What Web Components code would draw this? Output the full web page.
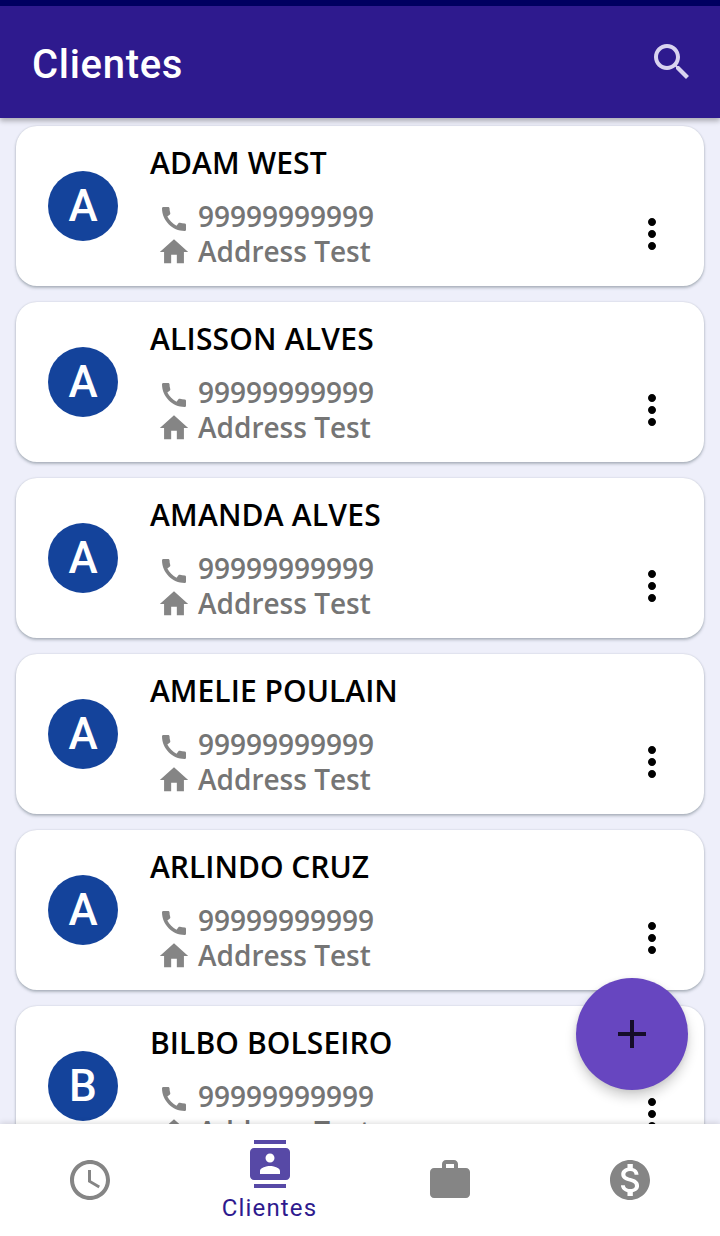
<!DOCTYPE html>
<html lang="pt">
<head>
<meta charset="utf-8">
<title>Clientes</title>
<style>
html, body { margin: 0; height: 100%; }
body { font-family: "Open Sans", "Noto Sans", sans-serif; overflow: hidden; }
</style>
</head>
<body>
<clients-app></clients-app>
<script>
const ICONS = {
  search: 'M15.5 14h-.79l-.28-.27C15.41 12.59 16 11.11 16 9.5 16 5.91 13.09 3 9.5 3S3 5.91 3 9.5 5.91 16 9.5 16c1.61 0 3.09-.59 4.23-1.57l.27.28v.79l5 4.99L20.49 19l-4.99-5zm-6 0C7.01 14 5 11.99 5 9.5S7.01 5 9.5 5 14 7.01 14 9.5 11.99 14 9.5 14z',
  phone: 'M20.01 15.38c-1.23 0-2.42-.2-3.53-.56-.35-.12-.74-.03-1.01.24l-1.57 1.97c-2.83-1.35-5.48-3.9-6.89-6.83l1.95-1.66c.27-.28.35-.67.24-1.02-.37-1.11-.56-2.3-.56-3.53 0-.54-.45-.99-.99-.99H4.19C3.65 3 3 3.24 3 3.99 3 13.28 10.73 21 20.01 21c.71 0 .99-.63.99-1.18v-3.45c0-.54-.45-.99-.99-.99z',
  home: 'M10 20v-6h4v6h5v-8h3L12 3 2 12h3v8z',
  more: 'M12 8c1.1 0 2-.9 2-2s-.9-2-2-2-2 .9-2 2 .9 2 2 2zm0 2c-1.1 0-2 .9-2 2s.9 2 2 2 2-.9 2-2-.9-2-2-2zm0 6c-1.1 0-2 .9-2 2s.9 2 2 2 2-.9 2-2-.9-2-2-2z',
  add: 'M19 13h-6v6h-2v-6H5v-2h6V5h2v6h6v2z',
  clock: 'M11.99 2C6.47 2 2 6.48 2 12s4.47 10 9.99 10C17.52 22 22 17.52 22 12S17.52 2 11.99 2zM12 20c-4.42 0-8-3.58-8-8s3.58-8 8-8 8 3.58 8 8-3.58 8-8 8zm.5-13H11v6l5.25 3.15.75-1.23-4.5-2.67z',
  contacts: 'M20 0H4v2h16V0zM4 24h16v-2H4v2zM20 4H4c-1.1 0-2 .9-2 2v12c0 1.1.9 2 2 2h16c1.1 0 2-.9 2-2V6c0-1.1-.9-2-2-2zm-8 2.75c1.24 0 2.25 1.01 2.25 2.25s-1.01 2.25-2.25 2.25S9.75 10.24 9.75 9 10.76 6.75 12 6.75zM17 17H7v-1.5c0-1.67 3.33-2.5 5-2.5s5 .83 5 2.5V17z',
  work: 'M20 6h-4V4c0-1.11-.89-2-2-2h-4c-1.11 0-2 .89-2 2v2H4c-1.11 0-1.99.89-1.99 2L2 19c0 1.11.89 2 2 2h16c1.11 0 2-.89 2-2V8c0-1.11-.89-2-2-2zm-6 0h-4V4h4v2z',
  money: 'M12 2C6.48 2 2 6.48 2 12s4.48 10 10 10 10-4.48 10-10S17.52 2 12 2zm1.41 16.09V20h-2.67v-1.93c-1.71-.36-3.16-1.46-3.27-3.4h1.96c.1 1.05.82 1.87 2.65 1.87 1.96 0 2.4-.98 2.4-1.59 0-.83-.44-1.61-2.67-2.14-2.48-.6-4.18-1.62-4.18-3.67 0-1.72 1.39-2.84 3.11-3.21V4h2.67v1.95c1.86.45 2.79 1.86 2.85 3.39H14.3c-.05-1.11-.64-1.87-2.22-1.87-1.5 0-2.4.68-2.4 1.64 0 .84.65 1.39 2.67 1.91s4.18 1.39 4.18 3.91c-.01 1.83-1.38 2.83-3.12 3.16z'
};

function define(name, html) {
  const template = document.createElement('template');
  template.innerHTML = html;
  customElements.define(name, class extends HTMLElement {
    constructor() {
      super();
      this.attachShadow({ mode: 'open' }).append(template.content.cloneNode(true));
    }
  });
}

customElements.define('md-icon', class extends HTMLElement {
  connectedCallback() {
    if (this.shadowRoot) return;
    this.attachShadow({ mode: 'open' }).innerHTML = `
      <style>
        :host { display: block; width: var(--size, 48px); height: var(--size, 48px); flex: none; }
        svg { display: block; width: 100%; height: 100%; fill: currentColor; }
      </style>
      <svg viewBox="0 0 24 24" aria-hidden="true"><path d="${ICONS[this.getAttribute('name')]}"/></svg>`;
  }
});

define('app-bar', `
  <style>
    :host { display: flex; box-sizing: border-box; height: 118px; flex: none; border-top: 6px solid #000060;
      background: #2e1a8e; color: #fff; padding: 0 24px 0 32px; align-items: center; justify-content: space-between;
      position: relative; z-index: 2; box-shadow: 0 3px 5px rgba(0,0,0,.28); }
    h1 { margin: 6px 0 0; font: 500 40px/48px Roboto, sans-serif; letter-spacing: .7px; }
    md-icon { color: #d9d3f0; }
  </style>
  <h1><slot></slot></h1><md-icon name="search"></md-icon>`);

define('client-card', `
  <style>
    :host { display: flex; box-sizing: border-box; height: 160px; flex: none; border-radius: 21px; background: #fff;
      padding: 0 28px 0 32px; box-shadow: 0 2px 3px rgba(60,75,85,.34), 0 0 2px rgba(60,75,85,.2); }
    .avatar { width: 70px; height: 70px; margin: 45px 32px 0 0; border-radius: 50%; background: #14439b; color: #fff;
      text-align: center; font: 500 44px/70px Roboto, sans-serif; flex: none; }
    .info { flex: 1; padding-top: 17px; }
    .name { font-weight: 600; font-size: 30px; line-height: 40px; color: #000; letter-spacing: var(--tracking, 0); white-space: nowrap; }
    .lines { margin: 16px 0 0 8px; color: #757575; }
    .line { display: flex; align-items: center; gap: 8px; height: 35px; font-weight: 600; font-size: 28px; line-height: 35px; white-space: nowrap; }
    .line md-icon { --size: 32px; color: #858585; }
    .phone md-icon { margin-top: 4px; }
    .line .home { --size: 34px; margin: 0 -1px; }
    .more { margin-top: 84px; color: #000; }
  </style>
  <div class="avatar"><slot name="initial"></slot></div>
  <div class="info">
    <div class="name"><slot></slot></div>
    <div class="lines">
      <div class="line phone"><md-icon name="phone"></md-icon><slot name="phone"></slot></div>
      <div class="line"><md-icon class="home" name="home"></md-icon><slot name="address"></slot></div>
    </div>
  </div>
  <md-icon class="more" name="more"></md-icon>`);

define('nav-item', `
  <style>
    :host { display: flex; flex: 1; flex-direction: column; align-items: center; justify-content: center; color: #858585; }
    :host([active]) { color: #5749a6; justify-content: flex-start; padding-top: 16px; }
    .label { display: none; }
    :host([active]) .label { display: block; color: #2e1a8e; font: 400 24px/28px Roboto, sans-serif; letter-spacing: 1.15px; margin: 6px 1px 0 0; }
  </style>
  <slot name="icon"></slot><div class="label"><slot></slot></div>`);

define('bottom-nav', `
  <style>
    :host { display: flex; height: 112px; flex: none; background: #fff; position: relative; z-index: 4;
      box-shadow: 0 -1px 6px rgba(0,0,0,.14); }
  </style><slot></slot>`);

define('add-button', `
  <style>
    :host { position: absolute; right: 32px; bottom: 34px; z-index: 3; width: 112px; height: 112px; border-radius: 50%;
      background: #6746c0; color: #150d29; display: flex; align-items: center; justify-content: center;
      box-shadow: 0 7px 12px rgba(0,0,0,.18), 0 1px 5px rgba(0,0,0,.08); }
  </style><md-icon name="add"></md-icon>`);

customElements.define('client-list', class extends HTMLElement {
  constructor() {
    super();
    const clients = [['ADAM WEST', .12], ['ALISSON ALVES', .2], ['AMANDA ALVES', .2], ['AMELIE POULAIN', .04], ['ARLINDO CRUZ', 0], ['BILBO BOLSEIRO', .08]];
    this.attachShadow({ mode: 'open' }).innerHTML = `
      <style>
        :host { display: flex; flex-direction: column; gap: 16px; flex: 1; min-height: 0; overflow: hidden; padding: 8px 16px 0; }
      </style>
      ${clients.map(([n, t]) => `<client-card style="--tracking:${t}px"><span slot="initial">${n[0]}</span>${n}<span slot="phone">99999999999</span><span slot="address">Address Test</span></client-card>`).join('')}`;
  }
});

define('clients-app', `
  <style>
    :host { display: flex; flex-direction: column; height: 1236px; background: #eeeffa; }
    main { flex: 1; min-height: 0; display: flex; position: relative; }
  </style>
  <app-bar>Clientes</app-bar>
  <main><client-list></client-list><add-button></add-button></main>
  <bottom-nav>
    <nav-item><md-icon slot="icon" name="clock"></md-icon></nav-item>
    <nav-item active><md-icon slot="icon" name="contacts"></md-icon>Clientes</nav-item>
    <nav-item><md-icon slot="icon" name="work"></md-icon></nav-item>
    <nav-item><md-icon slot="icon" name="money"></md-icon></nav-item>
  </bottom-nav>`);
</script>
</body>
</html>
